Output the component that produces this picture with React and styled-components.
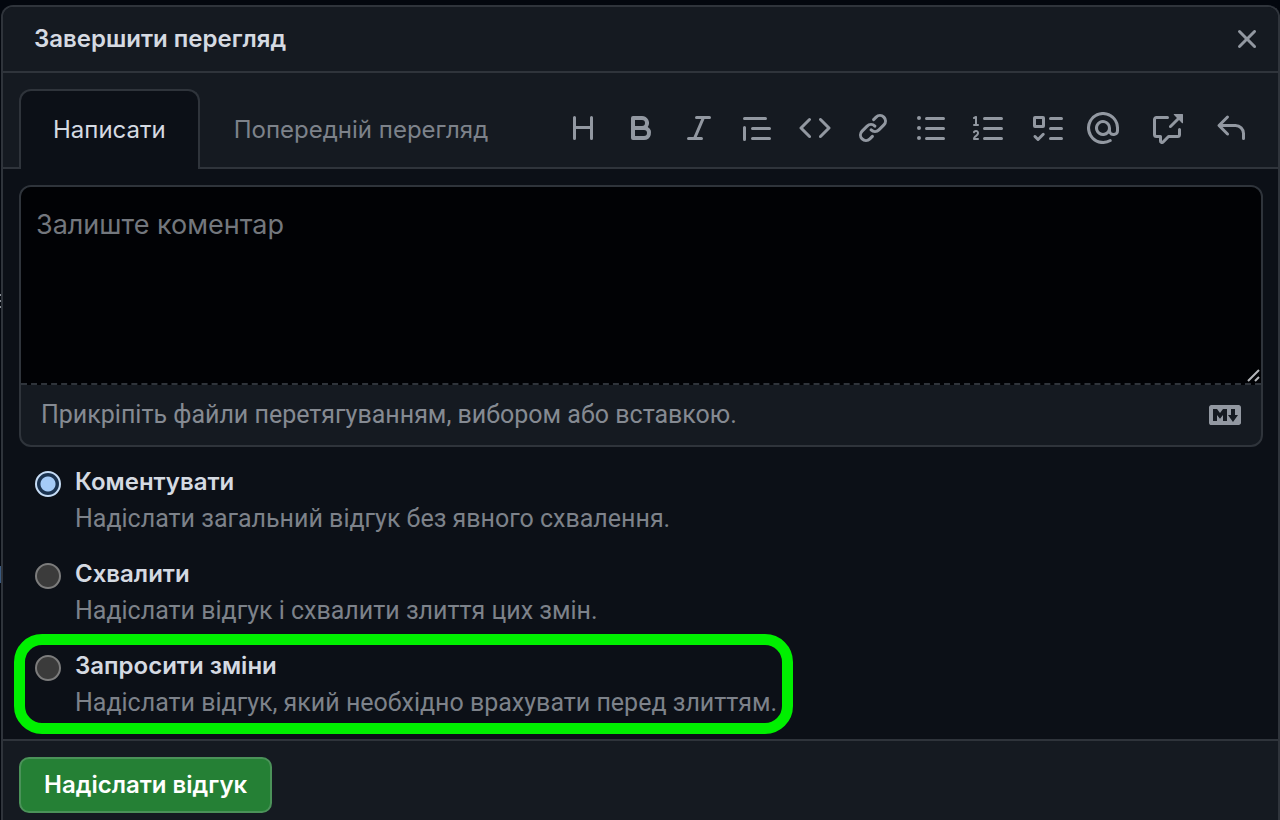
import React, { useState } from 'react'
import styled, { createGlobalStyle } from 'styled-components';

const GlobalStyle = createGlobalStyle`
    * {
        box-sizing: border-box;
    }
    body {
        margin: 0;
        background: #03070e;
        color: #d5dae2;
        font-family: Inter, "Liberation Sans", sans-serif;
        overflow: hidden;
    }
    button, textarea {
        font-family: inherit;
    }
`;

const Page = styled.div`
    position: relative;
    display: flex;
    min-height: 100vh;
    padding: 5px 0 0 1px;
`;

// slivers of the page that stays visible behind the dialog
const BehindText = styled.span`
    position: absolute;
    left: 0;
    top: 294px;
    width: 1px;
    height: 15px;
    background: repeating-linear-gradient(#8a8f97 0 2px, transparent 2px 6px);
`;

const BehindLink = styled.span`
    position: absolute;
    left: 0;
    top: 566px;
    width: 1px;
    height: 17px;
    background: #3a5a80;
`;

const Dialog = styled.form`
    flex: 1;
    min-width: 0;
    display: flex;
    flex-direction: column;
    border: 2px solid #2f343b;
    border-bottom: 0;
    border-radius: 12px 12px 0 0;
    background: #0c1017;
    overflow: hidden;
`;

const Header = styled.header`
    display: flex;
    align-items: center;
    justify-content: space-between;
    height: 66px;
    padding: 0 15px 0 31px;
    border-bottom: 2px solid #2f343b;
    background: #151a21;
`;

const Title = styled.h1`
    margin: 0;
    font-size: 24px;
    line-height: 32px;
    font-weight: 600;
`;

const IconButton = styled.button`
    display: flex;
    padding: 0;
    border: 0;
    background: none;
    color: #9298a1;
    cursor: pointer;
`;

const TabBar = styled.div`
    display: flex;
    align-items: flex-end;
    height: 96px;
    padding: 0 31px 0 16px;
    background: #151a21;
    box-shadow: inset 0 -2px #2f343b;
`;

const Tab = styled.button`
    height: 80px;
    padding: 0 32px;
    border: 2px solid ${({ $active }) => ($active ? '#2f343b' : 'transparent')};
    border-bottom: 0;
    border-radius: 12px 12px 0 0;
    background: ${({ $active }) => ($active ? '#0c1017' : 'transparent')};
    color: ${({ $active }) => ($active ? '#d5dae2' : '#7d828a')};
    font-size: 24px;
    line-height: 32px;
    white-space: nowrap;
    cursor: pointer;
`;

const Toolbar = styled.div`
    display: flex;
    gap: 24px;
    height: 82px;
    align-items: center;
    margin-left: auto;
`;

const ToolGroup = styled.div`
    display: flex;
    gap: ${({ $gap }) => $gap}px;
`;

const Body = styled.div`
    flex: 1;
    padding: 16px 15px 0 16px;
`;

const Editor = styled.div`
    border: 2px solid #2f343b;
    border-radius: 12px;
    background: #151a21;
    overflow: hidden;
`;

const Field = styled.div`
    position: relative;
    display: flex;
    border-bottom: 2px dashed #2f343b;
    background: #010205;
`;

const Comment = styled.textarea`
    flex: 1;
    height: 196px;
    padding: 20px 15px;
    border: 0;
    outline: 0;
    resize: none;
    background: transparent;
    color: #d5dae2;
    font-size: 27px;
    line-height: 36px;

    &::placeholder {
        color: #73777d;
        opacity: 1;
    }
`;

const Grip = styled.svg`
    position: absolute;
    right: 0;
    bottom: 0;
`;

const Attach = styled.div`
    display: flex;
    align-items: center;
    justify-content: space-between;
    height: 60px;
    padding: 0 20px;
    color: #858a92;
    font-family: Roboto, "Liberation Sans", sans-serif;
    font-size: 25px;
    line-height: 34px;
`;

const Options = styled.div`
    display: flex;
    flex-direction: column;
    gap: 22px;
    padding: 19px 16px;
`;

const Option = styled.div`
    position: relative;
    align-self: flex-start;
    display: grid;
    grid-template-columns: 26px auto;
    column-gap: 14px;
    row-gap: 4px;
    align-items: center;
`;

const Radio = styled.input`
    appearance: none;
    width: 26px;
    height: 26px;
    margin: 4px 0 0;
    border: 2px solid #7c7c7c;
    border-radius: 50%;
    background: #3b3b3b;

    &:checked {
        border-color: #c6dcf5;
        background: radial-gradient(circle, #a5cbf7 0 7px, #1b3350 8px);
    }
`;

const OptionLabel = styled.label`
    font-size: 24px;
    line-height: 32px;
    font-weight: 600;
`;

const OptionText = styled.p`
    grid-column: 2;
    margin: 0;
    color: #7d828a;
    font-family: Roboto, "Liberation Sans", sans-serif;
    font-size: 25px;
    line-height: 34px;
`;

const Highlight = styled.span`
    position: absolute;
    inset: -16px -16px -14px -21px;
    border: 11px solid #00f000;
    border-radius: 28px;
    pointer-events: none;
`;

const Footer = styled.footer`
    display: flex;
    height: 81px;
    padding: 16px 15px 0 16px;
    border-top: 2px solid #2f343b;
    background: #151a21;
`;

const Submit = styled.button`
    height: 56px;
    padding: 0 23px;
    border: 2px solid #4b9259;
    border-radius: 10px;
    background: #258035;
    color: #fff;
    font-size: 24px;
    line-height: 32px;
    font-weight: 600;
    cursor: pointer;
`;

const icons = {
    close: 'M3.72 3.72a.75.75 0 0 1 1.06 0L8 6.94l3.22-3.22a.749.749 0 0 1 1.275.326.749.749 0 0 1-.215.734L9.06 8l3.22 3.22a.749.749 0 0 1-.326 1.275.749.749 0 0 1-.734-.215L8 9.06l-3.22 3.22a.751.751 0 0 1-1.042-.018.751.751 0 0 1-.018-1.042L6.94 8 3.72 4.78a.75.75 0 0 1 0-1.06Z',
    heading: 'M3.75 2a.75.75 0 0 1 .75.75V7h7V2.75a.75.75 0 0 1 1.5 0v10.5a.75.75 0 0 1-1.5 0V8.5h-7v4.75a.75.75 0 0 1-1.5 0V2.75A.75.75 0 0 1 3.75 2Z',
    bold: 'M4 2h4.5a3.501 3.501 0 0 1 2.852 5.53A3.499 3.499 0 0 1 9.5 14H4a1 1 0 0 1-1-1V3a1 1 0 0 1 1-1Zm1 7v3h4.5a1.5 1.5 0 0 0 0-3Zm3.5-2a1.5 1.5 0 0 0 0-3H5v3Z',
    italic: 'M6 2.75A.75.75 0 0 1 6.75 2h6.5a.75.75 0 0 1 0 1.5h-2.505l-3.858 9H9.25a.75.75 0 0 1 0 1.5h-6.5a.75.75 0 0 1 0-1.5h2.505l3.858-9H6.75A.75.75 0 0 1 6 2.75Z',
    quote: 'M1.75 2.5h10.5a.75.75 0 0 1 0 1.5H1.75a.75.75 0 0 1 0-1.5Zm4 5h8.5a.75.75 0 0 1 0 1.5h-8.5a.75.75 0 0 1 0-1.5Zm0 5h8.5a.75.75 0 0 1 0 1.5h-8.5a.75.75 0 0 1 0-1.5ZM2.5 7.75v6a.75.75 0 0 1-1.5 0v-6a.75.75 0 0 1 1.5 0Z',
    code: 'm11.28 3.22 4.25 4.25a.75.75 0 0 1 0 1.06l-4.25 4.25a.749.749 0 0 1-1.275-.326.749.749 0 0 1 .215-.734L13.94 8l-3.72-3.72a.749.749 0 0 1 .326-1.275.749.749 0 0 1 .734.215Zm-6.56 0a.751.751 0 0 1 1.042.018.751.751 0 0 1 .018 1.042L2.06 8l3.72 3.72a.749.749 0 0 1-.326 1.275.749.749 0 0 1-.734-.215L.47 8.53a.75.75 0 0 1 0-1.06Z',
    link: 'm7.775 3.275 1.25-1.25a3.5 3.5 0 1 1 4.95 4.95l-2.5 2.5a3.5 3.5 0 0 1-4.95 0 .751.751 0 0 1 .018-1.042.751.751 0 0 1 1.042-.018 1.998 1.998 0 0 0 2.83 0l2.5-2.5a2.002 2.002 0 0 0-2.83-2.83l-1.25 1.25a.751.751 0 0 1-1.042-.018.751.751 0 0 1-.018-1.042Zm-4.69 9.64a1.998 1.998 0 0 0 2.83 0l1.25-1.25a.751.751 0 0 1 1.042.018.751.751 0 0 1 .018 1.042l-1.25 1.25a3.5 3.5 0 1 1-4.95-4.95l2.5-2.5a3.5 3.5 0 0 1 4.95 0 .751.751 0 0 1-.018 1.042.751.751 0 0 1-1.042.018 1.998 1.998 0 0 0-2.83 0l-2.5 2.5a1.998 1.998 0 0 0 0 2.83Z',
    bullets: 'M5.75 2.5h8.5a.75.75 0 0 1 0 1.5h-8.5a.75.75 0 0 1 0-1.5Zm0 5h8.5a.75.75 0 0 1 0 1.5h-8.5a.75.75 0 0 1 0-1.5Zm0 5h8.5a.75.75 0 0 1 0 1.5h-8.5a.75.75 0 0 1 0-1.5ZM2 14a1 1 0 1 1 0-2 1 1 0 0 1 0 2Zm1-6a1 1 0 1 1-2 0 1 1 0 0 1 2 0ZM2 4a1 1 0 1 1 0-2 1 1 0 0 1 0 2Z',
    numbers: 'M5 3.25a.75.75 0 0 1 .75-.75h8.5a.75.75 0 0 1 0 1.5h-8.5A.75.75 0 0 1 5 3.25Zm0 5a.75.75 0 0 1 .75-.75h8.5a.75.75 0 0 1 0 1.5h-8.5A.75.75 0 0 1 5 8.25Zm0 5a.75.75 0 0 1 .75-.75h8.5a.75.75 0 0 1 0 1.5h-8.5a.75.75 0 0 1-.75-.75ZM.924 10.32a.5.5 0 0 1-.851-.525l.001-.001.001-.002.002-.004.007-.011c.097-.144.215-.273.348-.384.228-.19.588-.392 1.068-.392.468 0 .858.181 1.126.484.259.294.377.673.377 1.038 0 .987-.686 1.495-1.156 1.845l-.047.035c-.303.225-.522.4-.654.597h1.357a.5.5 0 0 1 0 1H.5a.5.5 0 0 1-.5-.5c0-1.005.692-1.52 1.167-1.875l.035-.025c.531-.396.8-.625.8-1.078a.57.57 0 0 0-.128-.376C1.806 10.068 1.695 10 1.5 10a.658.658 0 0 0-.429.163.835.835 0 0 0-.144.153ZM2.003 2.5V6h.503a.5.5 0 0 1 0 1H.5a.5.5 0 0 1 0-1h.503V3.308l-.28.14a.5.5 0 0 1-.446-.895l1.003-.5a.5.5 0 0 1 .723.447Z',
    tasks: 'M2 2h4a1 1 0 0 1 1 1v4a1 1 0 0 1-1 1H2a1 1 0 0 1-1-1V3a1 1 0 0 1 1-1Zm4.655 8.595a.75.75 0 0 1 0 1.06L4.03 14.28a.75.75 0 0 1-1.06 0l-1.5-1.5a.749.749 0 0 1 .326-1.275.749.749 0 0 1 .734.215l.97.97 2.095-2.095a.75.75 0 0 1 1.06 0ZM9.75 2.5h5.5a.75.75 0 0 1 0 1.5h-5.5a.75.75 0 0 1 0-1.5Zm0 5h5.5a.75.75 0 0 1 0 1.5h-5.5a.75.75 0 0 1 0-1.5Zm0 5h5.5a.75.75 0 0 1 0 1.5h-5.5a.75.75 0 0 1 0-1.5Zm-7.25-9v3h3v-3Z',
    mention: 'M4.75 2.37a6.501 6.501 0 0 0 6.5 11.26.75.75 0 0 1 .75 1.298A7.999 7.999 0 0 1 .989 4.148 8 8 0 0 1 16 7.75v1.5a2.75 2.75 0 0 1-5.072 1.475 3.999 3.999 0 0 1-6.65-4.19A4 4 0 0 1 12 8v1.25a1.25 1.25 0 0 0 2.5 0V7.867a6.5 6.5 0 0 0-9.75-5.496ZM10.5 8a2.5 2.5 0 1 0-5 0 2.5 2.5 0 0 0 5 0Z',
    reference: 'M2.75 3.5a.25.25 0 0 0-.25.25v7.5c0 .138.112.25.25.25h2a.75.75 0 0 1 .75.75v2.19l2.72-2.72a.749.749 0 0 1 .53-.22h4.5a.25.25 0 0 0 .25-.25v-2.5a.75.75 0 0 1 1.5 0v2.5A1.75 1.75 0 0 1 13.25 13H9.06l-2.573 2.573A1.458 1.458 0 0 1 4 14.543V13H2.75A1.75 1.75 0 0 1 1 11.25v-7.5C1 2.784 1.784 2 2.75 2h5.5a.75.75 0 0 1 0 1.5ZM16 1.25v4.146a.25.25 0 0 1-.427.177L14.03 4.03l-3.75 3.75a.749.749 0 0 1-1.275-.326.749.749 0 0 1 .215-.734l3.75-3.75-1.543-1.543A.25.25 0 0 1 11.604 1h4.146a.25.25 0 0 1 .25.25Z',
    reply: 'M6.78 1.97a.75.75 0 0 1 0 1.06L3.81 6h6.44A4.75 4.75 0 0 1 15 10.75v2.5a.75.75 0 0 1-1.5 0v-2.5a3.25 3.25 0 0 0-3.25-3.25H3.81l2.97 2.97a.749.749 0 0 1-.326 1.275.749.749 0 0 1-.734-.215L1.47 7.28a.75.75 0 0 1 0-1.06l4.25-4.25a.75.75 0 0 1 1.06 0Z',
    markdown: 'M14.85 3c.63 0 1.15.52 1.14 1.15v7.7c0 .63-.51 1.15-1.15 1.15H1.15C.52 13 0 12.48 0 11.84V4.15C0 3.52.52 3 1.15 3ZM9 11V5H7L5.5 7 4 5H2v6h2V8l1.5 1.92L7 8v3Zm2.99.5L14.5 8H13V5h-2v3H9.5Z',
}

const Icon = ({ name }) => (
    <svg width="32" height="32" viewBox="0 0 16 16" fill="currentColor" aria-hidden="true">
        <path d={icons[name]} />
    </svg>
)

const formatTools = [
    { icon: 'heading', label: 'Заголовок' },
    { icon: 'bold', label: 'Жирний' },
    { icon: 'italic', label: 'Курсив' },
    { icon: 'quote', label: 'Цитата' },
    { icon: 'code', label: 'Код' },
    { icon: 'link', label: 'Посилання' },
    { icon: 'bullets', label: 'Список' },
    { icon: 'numbers', label: 'Нумерований список' },
    { icon: 'tasks', label: 'Список завдань' },
]

const referenceTools = [
    { icon: 'mention', label: 'Згадка' },
    { icon: 'reference', label: 'Перехресне посилання' },
    { icon: 'reply', label: 'Відповідь' },
]

const options = [
    {
        value: 'comment',
        title: 'Коментувати',
        text: 'Надіслати загальний відгук без явного схвалення.',
    },
    {
        value: 'approve',
        title: 'Схвалити',
        text: 'Надіслати відгук і схвалити злиття цих змін.',
    },
    {
        value: 'request',
        title: 'Запросити зміни',
        text: 'Надіслати відгук, який необхідно врахувати перед злиттям.',
        highlighted: true,
    },
]

const Tools = ({ items, gap }) => (
    <ToolGroup $gap={gap}>
        {items.map((item) => (
            <IconButton type="button" key={item.icon} aria-label={item.label}>
                <Icon name={item.icon} />
            </IconButton>
        ))}
    </ToolGroup>
)

const App = () => {
    const [tab, setTab] = useState('write');
    const [comment, setComment] = useState('');
    const [verdict, setVerdict] = useState('comment');

    return (
        <>
            <GlobalStyle />
            <Page>
                <BehindText />
                <BehindLink />
                <Dialog onSubmit={(e) => e.preventDefault()}>
                    <Header>
                        <Title>Завершити перегляд</Title>
                        <IconButton type="button" aria-label="Закрити">
                            <Icon name="close" />
                        </IconButton>
                    </Header>
                    <TabBar>
                        <Tab type="button" $active={tab === 'write'} onClick={() => setTab('write')}>
                            Написати
                        </Tab>
                        <Tab type="button" $active={tab === 'preview'} onClick={() => setTab('preview')}>
                            Попередній перегляд
                        </Tab>
                        <Toolbar>
                            <Tools items={formatTools} gap={26} />
                            <Tools items={referenceTools} gap={32} />
                        </Toolbar>
                    </TabBar>
                    <Body>
                        <Editor>
                            <Field>
                                <Comment
                                    aria-label="Коментар"
                                    placeholder="Залиште коментар"
                                    value={comment}
                                    onChange={(e) => setComment(e.target.value)}
                                />
                                <Grip width="14" height="14" viewBox="0 0 14 14" stroke="#b4b6ba" strokeWidth="2" aria-hidden="true">
                                    <path d="M1 12 12 1M8 12l4-4" />
                                </Grip>
                            </Field>
                            <Attach>
                                <span>Прикріпіть файли перетягуванням, вибором або вставкою.</span>
                                <IconButton type="button" aria-label="Markdown">
                                    <Icon name="markdown" />
                                </IconButton>
                            </Attach>
                        </Editor>
                        <Options>
                            {options.map((option) => (
                                <Option key={option.value}>
                                    <Radio
                                        type="radio"
                                        name="verdict"
                                        id={option.value}
                                        value={option.value}
                                        checked={verdict === option.value}
                                        onChange={() => setVerdict(option.value)}
                                    />
                                    <OptionLabel htmlFor={option.value}>{option.title}</OptionLabel>
                                    <OptionText>{option.text}</OptionText>
                                    {option.highlighted && <Highlight />}
                                </Option>
                            ))}
                        </Options>
                    </Body>
                    <Footer>
                        <Submit type="submit">Надіслати відгук</Submit>
                    </Footer>
                </Dialog>
            </Page>
        </>
    )
}

export default App
